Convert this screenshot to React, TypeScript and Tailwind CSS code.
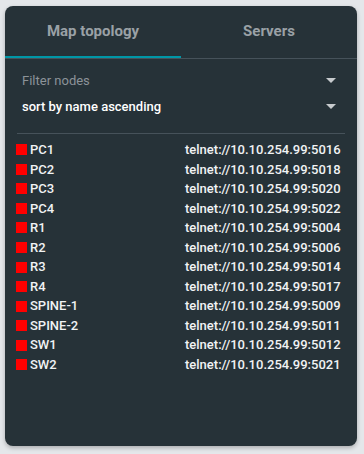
import React from "react";

const nodes: [string, string][] = [
  ["PC1", "5016"],
  ["PC2", "5018"],
  ["PC3", "5020"],
  ["PC4", "5022"],
  ["R1", "5004"],
  ["R2", "5006"],
  ["R3", "5014"],
  ["R4", "5017"],
  ["SPINE-1", "5009"],
  ["SPINE-2", "5011"],
  ["SW1", "5012"],
  ["SW2", "5021"],
];

function Caret() {
  return (
    <svg width="10" height="5" viewBox="0 0 10 5" className="block">
      <path d="M0 0 L10 0 L5 5 Z" fill="#c7cbce" />
    </svg>
  );
}

export default function App() {
  return (
    <div
      className="w-[364px] h-[454px] bg-[#e4e7ea] pt-[6px] pl-[5px]"
      style={{ fontFamily: "Roboto, 'Noto Sans', sans-serif" }}
    >
      <div className="w-[352px] h-[440px] bg-[#263238] rounded-[8px] shadow-[0_2px_4px_rgba(0,0,0,0.25)] overflow-hidden flex flex-col">
        <div className="flex h-[53px] border-b border-[#46525a]">
          <div className="w-[176px] flex items-center justify-center border-b-2 border-[#0097a7] text-[15px] font-bold text-[#9aa1a6] pt-[1px]">
            Map topology
          </div>
          <div className="flex-1 flex items-center justify-center text-[15px] font-bold text-[#9aa1a6] pt-[1px] pb-[2px]">
            Servers
          </div>
        </div>
        <div className="px-[12px]">
          <div className="px-[5px] pt-[11px]">
            <div className="h-[21px] flex items-center justify-between text-[13px] text-[#8c9398]">
              <span>Filter nodes</span>
              <span className="mr-[4px]">
                <Caret />
              </span>
            </div>
            <div className="h-[31px] flex items-center justify-between text-[13px] text-white font-medium">
              <span>sort by name ascending</span>
              <span className="mr-[4px]">
                <Caret />
              </span>
            </div>
          </div>
          <div className="mt-[11px] h-px bg-[#46525a]" />
        </div>
        <div className="pl-[11px] pt-[6px] flex flex-col">
          {nodes.map(([name, port]) => (
            <div
              key={name}
              className="h-[19.55px] flex items-center text-[13px] font-medium text-[#f1f3f4]"
            >
              <div className="w-[169px] flex items-center">
                <span className="w-[11px] h-[11px] bg-[#ff0000] mr-[3px] shrink-0" />
                <span>{name}</span>
              </div>
              <span>telnet://10.10.254.99:{port}</span>
            </div>
          ))}
        </div>
      </div>
    </div>
  );
}
